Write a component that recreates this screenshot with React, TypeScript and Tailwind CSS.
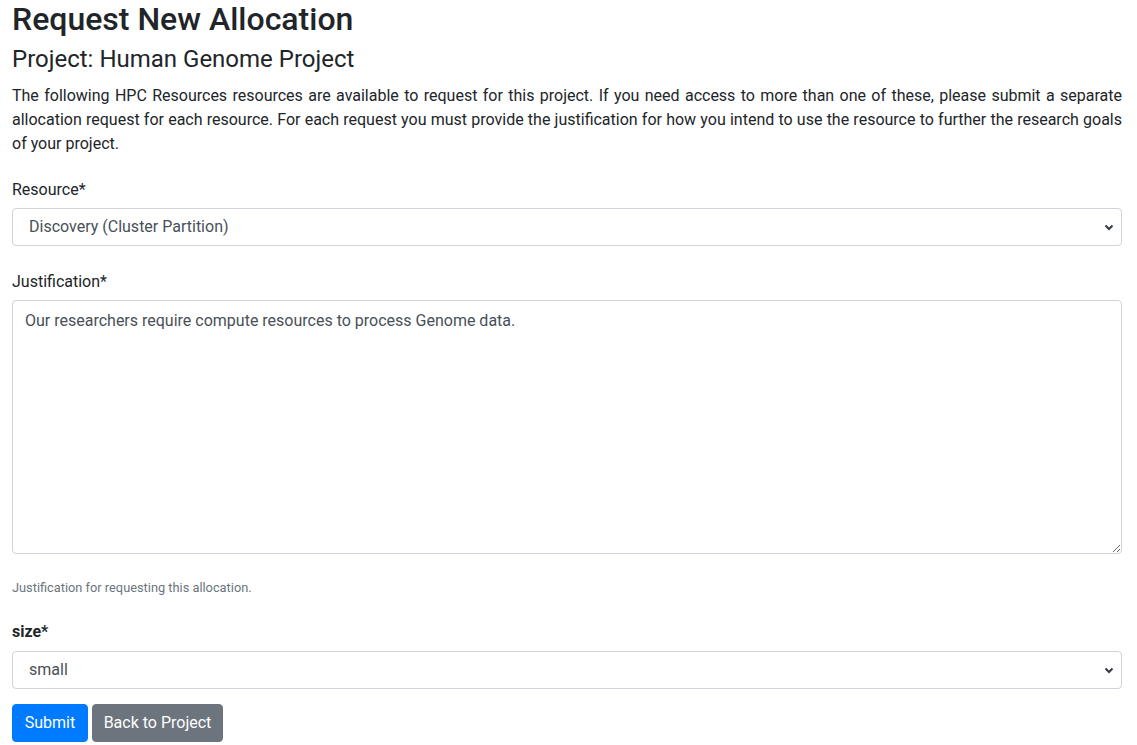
const paraLines = [
  "The following HPC Resources resources are available to request for this project. If you need access to more than one of these, please submit a separate",
  "allocation request for each resource. For each request you must provide the justification for how you intend to use the resource to further the research goals",
];

const Chevron = () => (
  <svg
    width="10"
    height="8"
    viewBox="0 0 10 8"
    className="pointer-events-none absolute right-[8px] top-1/2 -translate-y-1/2"
  >
    <path d="M1.5 2.5 L5 6 L8.5 2.5" fill="none" stroke="#343a40" strokeWidth="2" />
  </svg>
);

const SelectBox = ({ value }: { value: string }) => (
  <div className="relative">
    <select
      defaultValue={value}
      className="block h-[38px] w-full appearance-none rounded-[4px] border border-[#ced4da] bg-white pl-[16px] pr-8 text-[16px] text-[#495057] outline-none"
    >
      <option>{value}</option>
    </select>
    <Chevron />
  </div>
);

export default function App() {
  return (
    <div
      className="bg-white pl-3 pr-[15px] text-[16px] leading-[24px] text-[#212529]"
      style={{ fontFamily: 'Roboto, "Noto Sans", Arial, sans-serif' }}
    >
      <h2 className="text-[32px] font-medium leading-[38px]">Request New Allocation</h2>
      <h4 className="mt-[7px] text-[24px] leading-[29px]">Project: Human Genome Project</h4>
      <p className="mt-[10px]">
        {paraLines.map((l) => (
          <span key={l} className="block text-justify [text-align-last:justify]">
            {l}
          </span>
        ))}
        <span className="block">of your project.</span>
      </p>

      <form className="mt-[22px]">
        <div className="mb-[24px]">
          <label className="mb-[6px] block">Resource*</label>
          <SelectBox value="Discovery (Cluster Partition)" />
        </div>

        <div>
          <label className="mb-[6px] block">Justification*</label>
          <textarea
            defaultValue="Our researchers require compute resources to process Genome data."
            className="block h-[254px] w-full rounded-[4px] border border-[#ced4da] bg-white px-3 pb-[6px] pt-[8px] text-[16px] leading-[24px] text-[#495057] outline-none"
          />
          <small className="mt-[24px] block text-[12.8px] leading-[19px] text-[#6c757d]">
            Justification for requesting this allocation.
          </small>
        </div>

        <div className="mt-[23px]">
          <label className="mb-[7px] block font-bold">size*</label>
          <SelectBox value="small" />
        </div>

        <div className="mt-[15px] flex gap-1">
          <button
            type="button"
            className="h-[38px] w-[76px] rounded-[4px] border border-[#007bff] bg-[#007bff] text-white"
          >
            Submit
          </button>
          <button
            type="button"
            className="h-[38px] w-[131px] rounded-[4px] border border-[#6c757d] bg-[#6c757d] text-white"
          >
            Back to Project
          </button>
        </div>
      </form>
    </div>
  );
}
